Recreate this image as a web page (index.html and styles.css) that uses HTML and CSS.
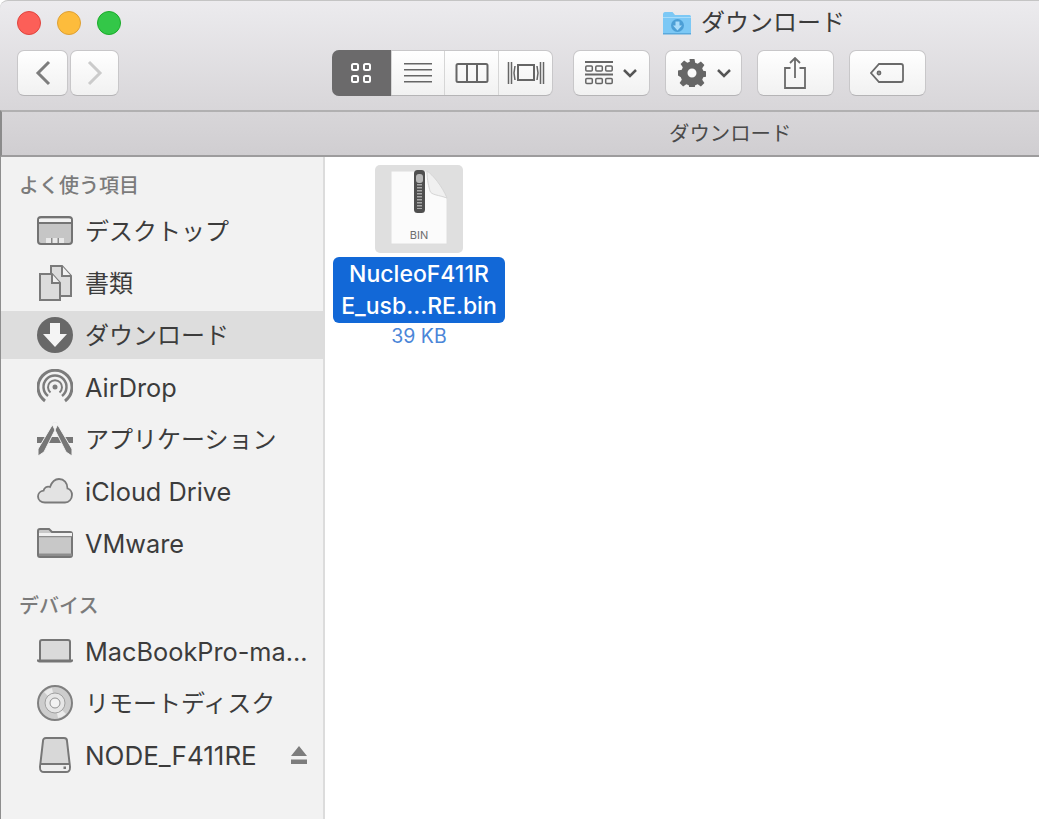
FILE: index.html
```html
<!DOCTYPE html>
<html lang="ja">
<head>
<meta charset="utf-8">
<title>ダウンロード</title>
<link rel="stylesheet" href="styles.css">
</head>
<body>
<div class="window">
  <header class="toolbar">
    <div class="title-row">
      <div class="lights">
        <span class="light red"></span><span class="light yellow"></span><span class="light green"></span>
      </div>
      <div class="title">
        <svg class="title-icon" width="30" height="24" viewBox="0 0 30 24"><path d="M1 3.500C1 2 1.800 1 3 1h7.500l2.500 3h14.500C28.300 4 29 4.800 29 6v15.500c0 1-.7 1.500-1.500 1.500h-25C1.700 23 1 22.500 1 21.500z" fill="#7cc8f5"/><path d="M1 6h28v1H1z" fill="#a8dcfa"/><path d="M1 22h28v1.500H1z" fill="#5aa9dc"/><circle cx="15.500" cy="14.500" r="6.500" fill="#4c9fd6"/><path d="M13.500 10.500h4v4h2.500l-4.500 5-4.500-5h2.500z" fill="#a9dcfa"/></svg>
        <span>ダウンロード</span>
      </div>
    </div>
    <div class="tool-row">
      <div class="nav">
        <button class="btn back"><svg width="16" height="26" viewBox="0 0 16 26"><path d="M14 2 3 13l11 11" fill="none" stroke="#7d7d7d" stroke-width="3"/></svg></button>
        <button class="btn forward"><svg width="16" height="26" viewBox="0 0 16 26"><path d="M2 2l11 11L2 24" fill="none" stroke="#cbcbcb" stroke-width="3"/></svg></button>
      </div>
      <div class="seg">
        <button class="seg-btn active"><svg width="22" height="22" viewBox="0 0 22 22" fill="none" stroke="#fff" stroke-width="2"><rect x="2" y="2" width="6" height="6" rx="1.500"/><rect x="14" y="2" width="6" height="6" rx="1.500"/><rect x="2" y="14" width="6" height="6" rx="1.500"/><rect x="14" y="14" width="6" height="6" rx="1.500"/></svg></button>
        <button class="seg-btn"><svg width="30" height="22" viewBox="0 0 30 22" fill="#666"><path d="M1 1h28v1.500H1zM1 7h28v1.500H1zM1 13h28v1.500H1zM1 19h28v1.500H1z"/></svg></button>
        <button class="seg-btn"><svg width="34" height="22" viewBox="0 0 34 22" fill="none" stroke="#666" stroke-width="2"><rect x="1.500" y="2" width="31" height="18" rx="1.500"/><path d="M12 2v18M22 2v18"/></svg></button>
        <button class="seg-btn"><svg width="38" height="24" viewBox="0 0 38 24" fill="none" stroke="#666" stroke-width="1.500"><rect x="11" y="4" width="16" height="15" stroke-width="2"/><path d="M1.500 1v22M4.500 1v22M8 5l-1 7 1 7M30 5l1 7-1 7M33.500 1v22M36.500 1v22"/></svg></button>
      </div>
      <button class="btn tool"><svg class="tool-svg" width="28" height="24" viewBox="0 0 28 24" fill="none" stroke="#666" stroke-width="1.500"><path d="M0 1h28M0 13.500h28" stroke-width="2"/><rect x=".8" y="5" width="6.500" height="5" rx="1"/><rect x="10.800" y="5" width="6.500" height="5" rx="1"/><rect x="20.700" y="5" width="6.500" height="5" rx="1"/><rect x=".8" y="17.500" width="6.500" height="5" rx="1"/><rect x="10.800" y="17.500" width="6.500" height="5" rx="1"/><rect x="20.700" y="17.500" width="6.500" height="5" rx="1"/></svg><svg width="16" height="10" viewBox="0 0 16 10"><path d="M2 2l6 6 6-6" fill="none" stroke="#555" stroke-width="2.500"/></svg></button>
      <button class="btn tool gear"><svg class="tool-svg" width="28" height="28" viewBox="0 0 28 28"><path fill="#666" fill-rule="evenodd" d="M11.500 0h5l.7 3.800 2.500 1 3.200-2.200 3.500 3.500-2.200 3.200 1 2.500 3.800.7v5l-3.800.7-1 2.500 2.200 3.200-3.500 3.500-3.200-2.200-2.500 1-.7 3.800h-5l-.7-3.800-2.500-1-3.200 2.200-3.500-3.500 2.200-3.200-1-2.500L0 16.500v-5l3.800-.7 1-2.500-2.200-3.200 3.500-3.500 3.200 2.200 2.500-1zM14 9.500a4.500 4.500 0 1 0 0 9 4.500 4.500 0 0 0 0-9z"/></svg><svg width="16" height="10" viewBox="0 0 16 10"><path d="M2 2l6 6 6-6" fill="none" stroke="#555" stroke-width="2.500"/></svg></button>
      <button class="btn tool plain"><svg width="24" height="32" viewBox="0 0 24 32" fill="none" stroke="#6a6a6a" stroke-width="1.800"><path d="M7.500 11H2v20h20V11h-5.500M12 21V1.500M7 6l5-5 5 5"/></svg></button>
      <button class="btn tool plain"><svg width="34" height="22" viewBox="0 0 34 22" fill="none" stroke="#6a6a6a" stroke-width="1.800"><path d="M9 2h22c1.200 0 2 .8 2 2v14c0 1.200-.8 2-2 2H9l-8-9z"/><circle cx="9" cy="11" r="1.500"/></svg></button>
    </div>
  </header>

  <div class="pathbar"><span>ダウンロード</span></div>

  <div class="main">
    <aside class="sidebar">
      <h2 class="side-head">よく使う項目</h2>
      <ul class="side-list">
        <li class="side-item">
          <svg class="side-icon" width="36" height="30" viewBox="0 0 36 30"><rect x="1" y="1" width="34" height="27" rx="3" fill="#c6c6c6" stroke="#737373" stroke-width="2"/><path d="M2 6h32v2H2z" fill="#757575"/><path d="M2 3h32v3H2z" fill="#f2f2f2"/><path d="M9 22h18v5H9z" fill="#e9e9e9"/><path d="M14 22h1.500v5H14zM20.500 22H22v5h-1.500z" fill="#8b8b8b"/></svg>
          <span class="cjk">デスクトップ</span>
        </li>
        <li class="side-item">
          <svg class="side-icon" width="36" height="36" viewBox="0 0 36 36"><path d="M14 9V1h11l9 10v20H22" fill="#dcdcdc" stroke="#7a7a7a" stroke-width="2"/><path d="M25 1v10h9" fill="#f1f1f1" stroke="#7a7a7a" stroke-width="2"/><path d="M3 9h12l8 9v17H3z" fill="#dcdcdc" stroke="#7a7a7a" stroke-width="2"/><path d="M15 9v9h8" fill="#f1f1f1" stroke="#7a7a7a" stroke-width="2"/></svg>
          <span class="cjk">書類</span>
        </li>
        <li class="side-item selected">
          <svg class="side-icon" width="36" height="36" viewBox="0 0 36 36"><circle cx="18" cy="18" r="18" fill="#686868"/><path d="M13 6h10v11h7L18 30 6 17h7z" fill="#f4f4f4"/></svg>
          <span class="cjk">ダウンロード</span>
        </li>
        <li class="side-item">
          <svg class="side-icon" width="36" height="36" viewBox="0 0 36 36" fill="none" stroke="#7c7c7c"><path d="M8 32a17 17 0 1 1 20 0" stroke-width="3"/><path d="M11 27a11.500 11.500 0 1 1 14 0" stroke-width="2.500"/><path d="M13.500 23.500a7 7 0 1 1 9 0" stroke-width="2"/><circle cx="18" cy="18" r="2.500" fill="#7c7c7c" stroke="none"/></svg>
          <span class="latin">AirDrop</span>
        </li>
        <li class="side-item">
          <svg class="side-icon" width="36" height="34" viewBox="0 0 36 34" fill="#767676"><path d="M0 15h36v6H0z"/><path d="M17 0l4 2L7 30l-6 4 0-7zM19 0l-4 2 14 28 6 4 0-7z" stroke="#f2f2f2" stroke-width="1"/></svg>
          <span class="cjk">アプリケーション</span>
        </li>
        <li class="side-item">
          <svg class="side-icon" width="36" height="26" viewBox="0 0 36 26"><path d="M8 24.500C4 24.500 1 22 1 18.500c0-3.200 2.400-5.500 5.500-5.800C7.200 9.500 10 8 13 9 14.800 4 18.500 1 22 1c5 0 8.500 4 8.500 9.500 3 1 4.500 3.500 4.500 6.500 0 4-3 7.500-7 7.500z" fill="#e3e3e3" stroke="#7a7a7a" stroke-width="1.800"/></svg>
          <span class="latin">iCloud Drive</span>
        </li>
        <li class="side-item">
          <svg class="side-icon" width="36" height="30" viewBox="0 0 36 30"><path d="M1 3c0-1.200.8-2 2-2h9l3 3h18c1.200 0 2 .8 2 2v21c0 1.200-.8 2-2 2H3c-1.200 0-2-.8-2-2z" fill="#c8c8c8" stroke="#767676" stroke-width="2"/><path d="M2 5h33v3H2z" fill="#f1f1f1"/><path d="M2 8h33v1.300H2zM2 25.500h33V28H2z" fill="#8d8d8d"/></svg>
          <span class="latin">VMware</span>
        </li>
      </ul>
      <h2 class="side-head second">デバイス</h2>
      <ul class="side-list">
        <li class="side-item">
          <svg class="side-icon" width="36" height="24" viewBox="0 0 36 24"><path d="M3 21V3c0-1.200.8-2 2-2h26c1.200 0 2 .8 2 2v18" fill="#dadada" stroke="#767676" stroke-width="2"/><path d="M0 20.500h36v1c0 1.200-1 2-2.500 2h-31C1 23.500 0 22.700 0 21.500z" fill="#767676"/></svg>
          <span class="latin">MacBookPro-ma...</span>
        </li>
        <li class="side-item">
          <svg class="side-icon" width="36" height="36" viewBox="0 0 36 36"><circle cx="18" cy="18" r="17" fill="#cdcdcd" stroke="#808080" stroke-width="2"/><path d="M18 18 7 7a15 15 0 0 1 8-4zM18 18l11 11a15 15 0 0 1-8 4z" fill="#ebebeb"/><circle cx="18" cy="18" r="10" fill="#e6e6e6" stroke="#a0a0a0" stroke-width="1"/><circle cx="18" cy="18" r="5" fill="#f2f2f2" stroke="#929292" stroke-width="1"/></svg>
          <span class="cjk">リモートディスク</span>
        </li>
        <li class="side-item">
          <svg class="side-icon" width="36" height="36" viewBox="0 0 36 36"><path d="M6 4c0-1.800 1-3 3-3h18c2 0 3 1.200 3 3l3 26c0 3-1.500 5-4 5H7c-2.500 0-4-2-4-5z" fill="#d8d8d8" stroke="#777" stroke-width="2"/><path d="M3.500 27H32.500" stroke="#777" stroke-width="2"/><path d="M4 28h28v3c0 2-1 3-3 3H7c-2 0-3-1-3-3z" fill="#efefef"/><rect x="26.500" y="29.500" width="2.500" height="2.500" fill="#777"/></svg>
          <span class="latin wide">NODE_F411RE</span>
          <svg class="eject" width="16" height="19" viewBox="0 0 16 19" fill="#7d7d7d"><path d="M8 0l8 10H0zM0 13.500h16V18H0z"/></svg>
        </li>
      </ul>
    </aside>
    <section class="content">
      <div class="file">
        <div class="thumb">
          <svg width="58" height="75" viewBox="0 0 58 75">
            <path d="M1 1h36c1 10 7 22 20 27v46H1z" fill="#fbfbfb" stroke="#dedede"/>
            <path d="M37 1c6 4 15 15 20 27-8-3-16-3-17-7s-3-10-3-20z" fill="#f0f0f0" stroke="#d6d6d6"/>
            <rect x="24" y="0" width="11" height="43" rx="3.500" fill="#4f4f4f"/>
            <path d="M29.500 14v25" stroke="#a8a8a8" stroke-width="5" stroke-dasharray="1.500 1.500" fill="none"/>
            <rect x="26" y="4" width="7" height="9" rx="3" fill="#b8b8b8"/>
            <text x="29" y="69" class="bin-label">BIN</text>
          </svg>
        </div>
        <div class="file-name">NucleoF411R<br>E_usb...RE.bin</div>
        <div class="file-size">39 KB</div>
      </div>
    </section>
  </div>
</div>
</body>
</html>
```
FILE: styles.css
```css
* { box-sizing: border-box; }
html, body { margin: 0; height: 100%; }
body {
  overflow: hidden;
  background: #fff;
  font-family: Inter, "Noto Sans CJK JP", sans-serif;
  color: #3d3d3d;
}
ul { list-style: none; margin: 0; padding: 0; }
button { font: inherit; margin: 0; padding: 0; }
.window { height: 819px; display: flex; flex-direction: column; }

.toolbar {
  height: 110px;
  flex: none;
  background: linear-gradient(#ecebee, #d8d6d9);
  border-top: 1px solid #c4c4c4;
  border-top-left-radius: 8px;
}
.title-row {
  height: 49px;
  display: flex;
  align-items: flex-start;
  padding: 10px 194px 0 17px;
}
.lights { display: flex; gap: 16px; }
.light { width: 24px; height: 24px; border-radius: 50%; border: 1px solid; }
.red { background: #fc5f58; border-color: #e0443e; }
.yellow { background: #fdbc3c; border-color: #dea034; }
.green { background: #33c748; border-color: #1aab29; }
.title {
  margin-left: auto;
  display: flex;
  align-items: center;
  gap: 9px;
  font-size: 24px;
  line-height: 24px;
  color: #3b3b3b;
}
.tool-row { display: flex; align-items: center; padding-left: 17px; }
.nav { display: flex; gap: 2px; margin-right: 213px; }
.btn {
  height: 46px;
  background: linear-gradient(#ffffff, #f1f1f1);
  border: 1px solid #c8c7c9;
  border-bottom-color: #b5b4b6;
  border-radius: 7px;
  display: flex;
  align-items: center;
  justify-content: center;
}
.back { width: 51px; }
.forward { width: 49px; }
.seg {
  display: flex;
  width: 221px;
  height: 46px;
  margin-right: 20px;
  background: linear-gradient(#ffffff, #f1f1f1);
  border: 1px solid #c8c7c9;
  border-bottom-color: #b5b4b6;
  border-radius: 7px;
}
.seg-btn {
  width: 54px;
  border: 0;
  border-left: 1px solid #d6d6d6;
  background: none;
  display: flex;
  align-items: center;
  justify-content: center;
}
.seg-btn.active {
  width: 59px;
  margin: -1px 0 -1px -1px;
  border-left: 0;
  border-radius: 7px 0 0 7px;
  background: #6b6a6b;
}
.tool { width: 77px; margin-right: 15px; gap: 9px; }
.tool.gear { gap: 10px; padding-left: 2px; }
.tool.plain { padding-right: 2px; }
.tool-svg { flex: none; }

.pathbar {
  height: 47px;
  flex: none;
  padding: 9px 0 0 667px;
  background: linear-gradient(#d8d6d9, #d0ced1);
  border-top: 2px solid #b1b0b1;
  border-bottom: 2px solid #9d9c9d;
  border-left: 2px solid #8b8b8b;
  font-size: 20.4px;
  line-height: 26px;
  color: #4a4a4a;
}

.main { flex: 1; display: flex; min-height: 0; }
.sidebar {
  width: 325px;
  flex: none;
  padding-top: 17px;
  background: #f2f2f2;
  border-left: 1px solid #8e8e8e;
  border-right: 2px solid #dcdcdc;
}
.side-head {
  margin: 0;
  padding-left: 18px;
  font-size: 20px;
  font-weight: 500;
  line-height: 24px;
  color: #7b7b7b;
}
.side-head.second { margin-top: 27px; }
.side-list { display: flex; flex-direction: column; gap: 4px; margin-top: 9px; }
.side-list:last-child { margin-top: 9px; }
.side-item {
  height: 48px;
  display: flex;
  align-items: center;
  gap: 12px;
  padding: 0 16px 0 36px;
  font-size: 24px;
  white-space: nowrap;
  color: #3c3c3c;
}
.side-item .cjk { padding-bottom: 3px; }
.side-item .latin { font-size: 25.3px; padding-top: 1px; }
.side-item .latin.wide { font-size: 26px; padding-top: 0; }
.side-item.selected { background: #dddddd; }
.side-icon { flex: none; width: 36px; }
.eject { margin-left: auto; flex: none; }

.content { flex: 1; padding: 8px 0 0 8px; min-width: 0; }
.file { width: 172px; display: flex; flex-direction: column; align-items: center; }
.thumb {
  width: 88px;
  height: 88px;
  padding-top: 5px;
  background: #dfdfdf;
  border-radius: 5px;
  display: flex;
  align-items: flex-start;
  justify-content: center;
}
.bin-label { font-size: 11px; fill: #6e6e6e; text-anchor: middle; }
.file-name {
  width: 172px;
  margin-top: 4px;
  padding: 1px 0 1px;
  background: #1268d7;
  border-radius: 6px;
  color: #fff;
  font-size: 23px;
  font-weight: 500;
  line-height: 32px;
  text-align: center;
  white-space: nowrap;
}
.file-size { margin-top: 1px; font-size: 19.5px; line-height: 24px; color: #4b86d8; }
```
